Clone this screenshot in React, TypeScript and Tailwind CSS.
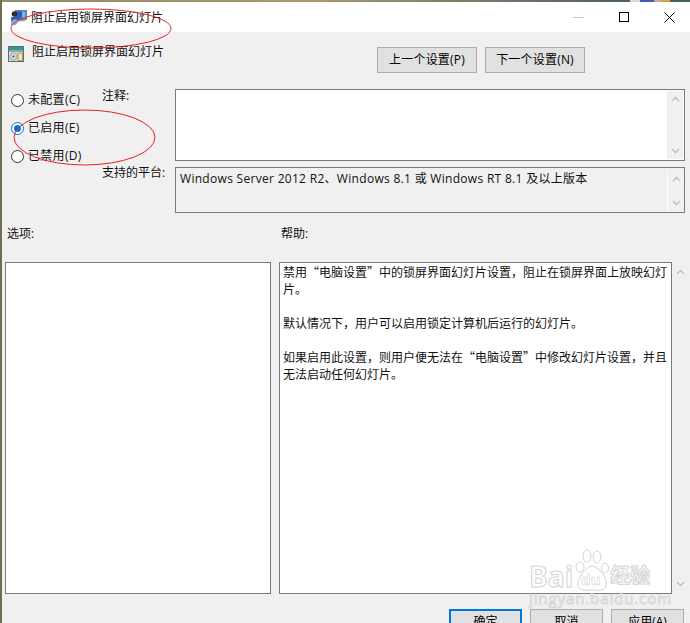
const FONT = "font-['Open_Sans','Noto_Sans_CJK_SC',sans-serif]"

function Chevron({ up }: { up?: boolean }) {
  return (
    <svg width="9" height="6" viewBox="0 0 9 6" className="block">
      <path d={up ? 'M1 5 L4.5 1.5 L8 5' : 'M1 1 L4.5 4.5 L8 1'} fill="none" stroke="#c4c4c4" strokeWidth="1.6" />
    </svg>
  )
}

function ScrollBar({ className }: { className: string }) {
  return (
    <div className={`flex flex-col items-center justify-between bg-[#f0f0f0] ${className}`}>
      <Chevron up />
      <Chevron />
    </div>
  )
}

function Radio({ label, checked }: { label: string; checked?: boolean }) {
  return (
    <div className="flex h-[28px] items-center gap-[4px] tracking-[0.3px]">
      <span className={`flex h-[13px] w-[13px] items-center justify-center rounded-full border bg-white ${checked ? 'border-[#0078d7]' : 'border-[#333333]'}`}>
        {checked && <span className="h-[7px] w-[7px] rounded-full bg-[#0078d7]" />}
      </span>
      <span>{label}</span>
    </div>
  )
}

function Btn({ label, primary }: { label: string; primary?: boolean }) {
  return (
    <button className={`h-[26px] bg-[#e1e1e1] ${primary ? 'border-2 border-[#0078d7]' : 'border border-[#adadad]'} w-[73px] text-[12px] text-black`}>
      {label}
    </button>
  )
}

function WinIcon() {
  return (
    <svg width="17" height="17" viewBox="0 0 17 17" className="block">
      <rect x="5" y="1" width="12" height="10" fill="#6f7f96" />
      <rect x="6.5" y="2.5" width="9" height="7" fill="#1f5fd0" />
      <rect x="12" y="2.5" width="3.5" height="7" fill="#6fb6ee" />
      <rect x="8" y="11" width="7" height="1.5" fill="#a9b3c2" />
      <circle cx="4.5" cy="5" r="2.8" fill="#3a2c24" />
      <path d="M1 8.5 C1 7.5 8 7.5 8 8.5 L8 11 L5 13 L5 16 L1.5 16 Z" fill="#2e5f9e" />
      <path d="M1.5 16 C1 13 2 11 4 10.5 C6 10 8 11 8 13 L6 16 Z" fill="#8fb0cf" />
    </svg>
  )
}

function PolicyIcon() {
  return (
    <svg width="16" height="16" viewBox="0 0 16 16" className="block">
      <rect x="0" y="0" width="16" height="16" fill="#5f6a6e" />
      <rect x="1" y="1" width="14" height="3" fill="#2f9a92" />
      <rect x="1" y="4" width="14" height="2" fill="#9aa3a6" />
      <rect x="1" y="6" width="14" height="9" fill="#e6e6d8" />
      <circle cx="5.5" cy="10.5" r="3.8" fill="#cfd6d4" stroke="#7d8285" strokeWidth="0.6" />
      <circle cx="5.5" cy="10.5" r="1" fill="#4b5358" />
      <rect x="10" y="7" width="4.5" height="7.5" fill="#f1e6a6" stroke="#6d6a50" strokeWidth="0.6" />
    </svg>
  )
}

export default function App() {
  return (
    <div className={`relative flex h-[623px] w-[690px] flex-col overflow-hidden border-l-2 border-[#6e6e55] bg-[#f0f0f0] text-[12px] leading-[18px] text-[#111111] ${FONT}`}>
      <div className="flex h-[2px] shrink-0">
        <div className="flex-1 bg-gradient-to-r from-[#8d8d68] via-[#a89a70] to-[#4c6060]" />
        <div className="h-[2px] w-[10px] bg-[#d8d8e8]" />
        <div className="h-[2px] w-[14px] bg-[#3a5fc0]" />
        <div className="h-[2px] w-[8px] bg-[#d8a0a0]" />
        <div className="h-[2px] w-[8px] bg-[#c8a838]" />
        <div className="h-[2px] w-[20px] bg-[#4c6060]" />
      </div>

      <div className="flex h-[30px] shrink-0 items-center bg-white">
        <div className="ml-[8px]"><WinIcon /></div>
        <span className="ml-[4px] mt-[1px]">阻止启用锁屏界面幻灯片</span>
        <div className="ml-auto flex items-center">
          <div className="h-[1px] w-[11px] bg-[#c8c8c8]" />
          <div className="ml-[35px] h-[10px] w-[10px] border border-black" />
          <svg width="11" height="11" viewBox="0 0 11 11" className="ml-[35px] mr-[15px] block">
            <path d="M0.5 0.5 L10.5 10.5 M10.5 0.5 L0.5 10.5" stroke="#111111" strokeWidth="1" />
          </svg>
        </div>
      </div>

      <div className="flex h-[57px] shrink-0 items-start">
        <div className="ml-[6px] mt-[14px]"><PolicyIcon /></div>
        <span className="ml-[8px] mt-[11px]">阻止启用锁屏界面幻灯片</span>
        <div className="ml-auto mr-[105px] mt-[15px] flex gap-[8px]">
          <button className="h-[26px] w-[100px] border border-[#adadad] bg-[#e1e1e1] text-[12px] tracking-[0.2px] text-black">上一个设置(P)</button>
          <button className="h-[26px] w-[100px] border border-[#adadad] bg-[#e1e1e1] text-[12px] tracking-[0.2px] text-black">下一个设置(N)</button>
        </div>
      </div>

      <div className="grid shrink-0 grid-cols-[100px_73px_510px] grid-rows-[72px_46px] gap-y-[6px]">
        <div className="row-span-2 -mt-[3px] pl-[9px]">
          <Radio label="未配置(C)" />
          <Radio label="已启用(E)" checked />
          <Radio label="已禁用(D)" />
        </div>
        <div className="pt-[1px] leading-[12px]">注释:</div>
        <div className="flex border border-[#7a7a7a] bg-white p-[1px]">
          <div className="flex-1" />
          <ScrollBar className="w-[16px] py-[5px]" />
        </div>
        <div className="leading-[12px]">支持的平台:</div>
        <div className="flex border border-[#7a7a7a] pl-[4px] pt-[2px]">
          <div className="flex-1 tracking-[0.3px]">Windows Server 2012 R2、Windows 8.1 或 Windows RT 8.1 及以上版本</div>
          <ScrollBar className="w-[17px] border-l border-white py-[6px]" />
        </div>
      </div>

      <div className="mt-[12px] flex h-[20px] shrink-0">
        <span className="ml-[5px] w-[274px]">选项:</span>
        <span>帮助:</span>
      </div>

      <div className="mt-[17px] flex h-[332px] shrink-0">
        <div className="ml-[3px] w-[266px] border border-[#7a7a7a] bg-white" />
        <div className="ml-[8px] w-[393px] border border-[#7a7a7a] bg-white pl-[3px] font-['Noto_Sans_CJK_SC',sans-serif] leading-[17px]">
          <p>禁用“电脑设置”中的锁屏界面幻灯片设置，阻止在锁屏界面上放映幻灯片。</p>
          <p className="mt-[17px]">默认情况下，用户可以启用锁定计算机后运行的幻灯片。</p>
          <p className="mt-[17px]">如果启用此设置，则用户便无法在“电脑设置”中修改幻灯片设置，并且无法启动任何幻灯片。</p>
        </div>
        <ScrollBar className="w-[16px] py-[7px]" />
      </div>

      <div className="ml-[447px] mt-[15px] flex shrink-0 gap-[8px]">
        <Btn label="确定" primary />
        <Btn label="取消" />
        <Btn label="应用(A)" />
      </div>

      <div className="pointer-events-none absolute left-[527px] top-[549px] text-white">
        <div className="flex h-[44px] items-end">
          <span className="text-[28px] font-bold leading-[34px] [-webkit-text-stroke:1px_#d4d4d4]">Bai</span>
          <div className="relative ml-[1px]">
            <svg width="36" height="44" viewBox="0 0 36 44" className="block">
              <g fill="#ffffff" stroke="#d4d4d4">
                <ellipse cx="6" cy="18" rx="4" ry="5" />
                <ellipse cx="13" cy="7" rx="4" ry="6" />
                <ellipse cx="23" cy="8" rx="4" ry="6" />
                <ellipse cx="31" cy="19" rx="3.5" ry="5" />
                <path d="M18 17 C24 17 35 30 32 37 C30 43 23 41 18 41 C13 41 6 43 4 37 C2 31 12 17 18 17 Z" />
              </g>
            </svg>
            <span className="absolute left-[7px] top-[21px] text-[15px] font-bold leading-[18px] text-white [-webkit-text-stroke:0.6px_#d4d4d4]">du</span>
          </div>
          <span className="text-[20px] font-bold leading-[34px] [-webkit-text-stroke:1px_#d4d4d4]">经验</span>
        </div>
        <div className="-mt-[4px] text-[15px] leading-[18px] tracking-[0.9px] [-webkit-text-stroke:1px_#d9d9d9]">jingyan.baidu.com</div>
      </div>

      <svg className="pointer-events-none absolute -left-[2px] top-0" width="690" height="623" fill="none" stroke="#e8202a" strokeWidth="1">
        <ellipse cx="91" cy="28.5" rx="80" ry="19.5" />
        <ellipse cx="84.5" cy="137.5" rx="70.5" ry="27.5" />
      </svg>
    </div>
  )
}
